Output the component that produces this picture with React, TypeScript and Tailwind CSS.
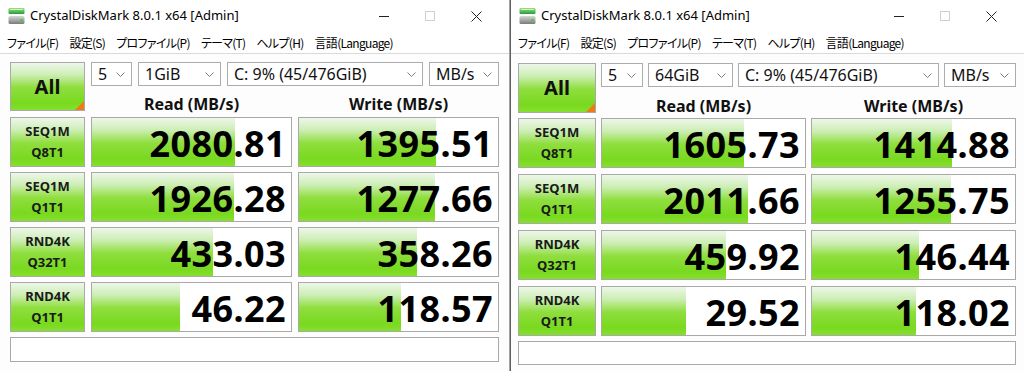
import React from "react";

const tests = [
  { name: "SEQ1M", sub: "Q8T1" },
  { name: "SEQ1M", sub: "Q1T1" },
  { name: "RND4K", sub: "Q32T1" },
  { name: "RND4K", sub: "Q1T1" },
];

const menu = ["ファイル(F)", "設定(S)", "プロファイル(P)", "テーマ(T)", "ヘルプ(H)", "言語(Language)"];

// full class strings per window, the right one was captured a touch larger
const layouts = [
  {
    win: "w-[510px] border-r border-[#a3a3a3]",
    body: "pl-[10px] pr-[10px] pt-[8px]",
    grid: "grid-cols-[75px_1fr_1fr] gap-x-[6px]",
    top: "grid-rows-[24px_25px]",
    list: "mt-[6px] gap-y-[5px]",
    comment: "mt-[5px] h-[25px]",
    drops: ["w-[41px]", "w-[83px]", "flex-1", "w-[70px]"],
    gap: "gap-[6px]",
  },
  {
    win: "flex-1 border-l border-[#5f5f5f]",
    body: "pl-[7px] pr-[8px] pt-[9px]",
    grid: "grid-cols-[78px_1fr_1fr] gap-x-[5px]",
    top: "grid-rows-[24px_26px]",
    list: "mt-[5px] gap-y-[6px]",
    comment: "mt-[5px] h-[24px]",
    drops: ["w-[42px]", "w-[85px]", "flex-1", "w-[72px]"],
    gap: "gap-[5px]",
  },
];

const windows = [
  {
    size: "1GiB",
    results: [
      [2080.81, 1395.51],
      [1926.28, 1277.66],
      [433.03, 358.26],
      [46.22, 118.57],
    ],
  },
  {
    size: "64GiB",
    results: [
      [1605.73, 1414.88],
      [2011.66, 1255.75],
      [459.92, 146.44],
      [29.52, 118.02],
    ],
  },
];

const green =
  "bg-[linear-gradient(to_bottom,#eef7ea_0%,#cdeeb5_25%,#8fde3e_52%,#79d91f_85%,#86e02e_100%)]";

function barWidth(v: number) {
  const r = Math.log10(v * 10) / 6;
  return `${Math.max(0, Math.min(1, r)) * 100}%`;
}

function AppIcon() {
  return (
    <svg width="17" height="18" viewBox="0 0 17 18">
      <defs>
        <linearGradient id="g1" x1="0" y1="0" x2="0" y2="1">
          <stop offset="0" stopColor="#9be07c" />
          <stop offset="1" stopColor="#23a03a" />
        </linearGradient>
        <linearGradient id="g2" x1="0" y1="0" x2="0" y2="1">
          <stop offset="0" stopColor="#d8d8d8" />
          <stop offset="1" stopColor="#7a7a7a" />
        </linearGradient>
      </defs>
      <rect x="0.5" y="1" width="16" height="6" rx="1" fill="url(#g1)" />
      <rect x="2" y="2" width="13" height="1" fill="#e9f8e4" opacity="0.8" />
      <rect x="0.5" y="9" width="16" height="8" rx="1.5" fill="url(#g2)" />
      <rect x="12" y="12" width="3" height="2" fill="#3fd24a" />
    </svg>
  );
}

function Chevron() {
  return (
    <svg width="9" height="5" viewBox="0 0 9 5" className="shrink-0">
      <path d="M0.5 0.5 L4.5 4.5 L8.5 0.5" fill="none" stroke="#7b7b7b" strokeWidth="1" />
    </svg>
  );
}

function Dropdown({ text, w }: { text: string; w: string }) {
  return (
    <div className={`${w} h-[24px] flex items-center justify-between border border-[#acacac] bg-white pl-[6px] pr-[6px]`}>
      <span className="text-[16px] leading-none text-[#111] whitespace-nowrap">{text}</span>
      <Chevron />
    </div>
  );
}

function TitleBar() {
  return (
    <div className="h-[32px] flex items-center bg-white">
      <div className="pl-[8px] pr-[5px] flex items-center">
        <AppIcon />
      </div>
      <span className="text-[13px] text-black whitespace-nowrap">CrystalDiskMark 8.0.1 x64 [Admin]</span>
      <div className="ml-auto flex items-center h-full">
        <div className="w-[46px] h-full flex items-center justify-center">
          <div className="w-[10px] h-px bg-[#222]" />
        </div>
        <div className="w-[46px] h-full flex items-center justify-center">
          <div className="w-[10px] h-[10px] border border-[#cfcfcf]" />
        </div>
        <div className="w-[46px] h-full flex items-center justify-center">
          <svg width="11" height="11" viewBox="0 0 11 11">
            <path d="M0.5 0.5 L10.5 10.5 M10.5 0.5 L0.5 10.5" stroke="#222" strokeWidth="1" />
          </svg>
        </div>
        <div className="w-[10px]" />
      </div>
    </div>
  );
}

function Window({ idx }: { idx: number }) {
  const l = layouts[idx];
  const data = windows[idx];
  return (
    <div className={`${l.win} h-[371px] flex flex-col bg-white font-['Noto_Sans','Open_Sans',sans-serif]`}>
      <TitleBar />
      <div className="h-[22px] flex items-center gap-[11px] pl-[7px] border-b border-[#dadada] font-['Noto_Sans_CJK_JP',sans-serif] [font-feature-settings:'palt'] text-[12px] tracking-[-0.7px] text-black">
        {menu.map((m) => (
          <span key={m} className="shrink-0 whitespace-nowrap">
            {m}
          </span>
        ))}
      </div>
      <div className={`flex-1 bg-[#fdfdfd] ${l.body}`}>
        <div className={`grid ${l.grid} ${l.top}`}>
          <div className={`row-span-2 relative border border-[#a9a9a9] ${green} flex items-center justify-center`}>
            <span className="text-[20px] font-bold text-[#111] leading-none">All</span>
            <div className="absolute right-0 bottom-0 w-0 h-0 border-l-[9px] border-l-transparent border-b-[9px] border-b-[#ee7a18]" />
          </div>
          <div className={`col-span-2 flex ${l.gap}`}>
            <Dropdown text="5" w={l.drops[0]} />
            <Dropdown text={data.size} w={l.drops[1]} />
            <Dropdown text="C: 9% (45/476GiB)" w={l.drops[2]} />
            <Dropdown text="MB/s" w={l.drops[3]} />
          </div>
          <div className="flex items-end justify-center">
            <span className="text-[16px] font-bold text-[#111] leading-[14px]">Read (MB/s)</span>
          </div>
          <div className="flex items-end justify-center">
            <span className="text-[16px] font-bold text-[#111] leading-[14px]">Write (MB/s)</span>
          </div>
        </div>
        <div className={`grid ${l.grid} ${l.list}`}>
          {tests.map((t, i) => (
            <React.Fragment key={i}>
              <div className={`h-[50px] border border-[#a9a9a9] ${green} flex flex-col items-center justify-center text-[13px] font-bold text-[#1a1a1a] leading-[21px]`}>
                <span>{t.name}</span>
                <span>{t.sub}</span>
              </div>
              {data.results[i].map((v, j) => (
                <div key={j} className="h-[50px] border border-[#a9a9a9] bg-white relative overflow-hidden">
                  <div className={`absolute left-0 top-0 bottom-0 ${green}`} style={{ width: barWidth(v) }} />
                  <div className="relative h-full flex items-center justify-end pr-[5px] pt-[3px]">
                    <span className="text-[36px] tracking-[0.4px] font-bold text-black leading-none">{v.toFixed(2)}</span>
                  </div>
                </div>
              ))}
            </React.Fragment>
          ))}
        </div>
        <div className={`${l.comment} border border-[#a9a9a9] bg-white`} />
      </div>
    </div>
  );
}

export default function App() {
  return (
    <div className="w-[1024px] h-[371px] flex bg-white overflow-hidden">
      <Window idx={0} />
      <Window idx={1} />
    </div>
  );
}
